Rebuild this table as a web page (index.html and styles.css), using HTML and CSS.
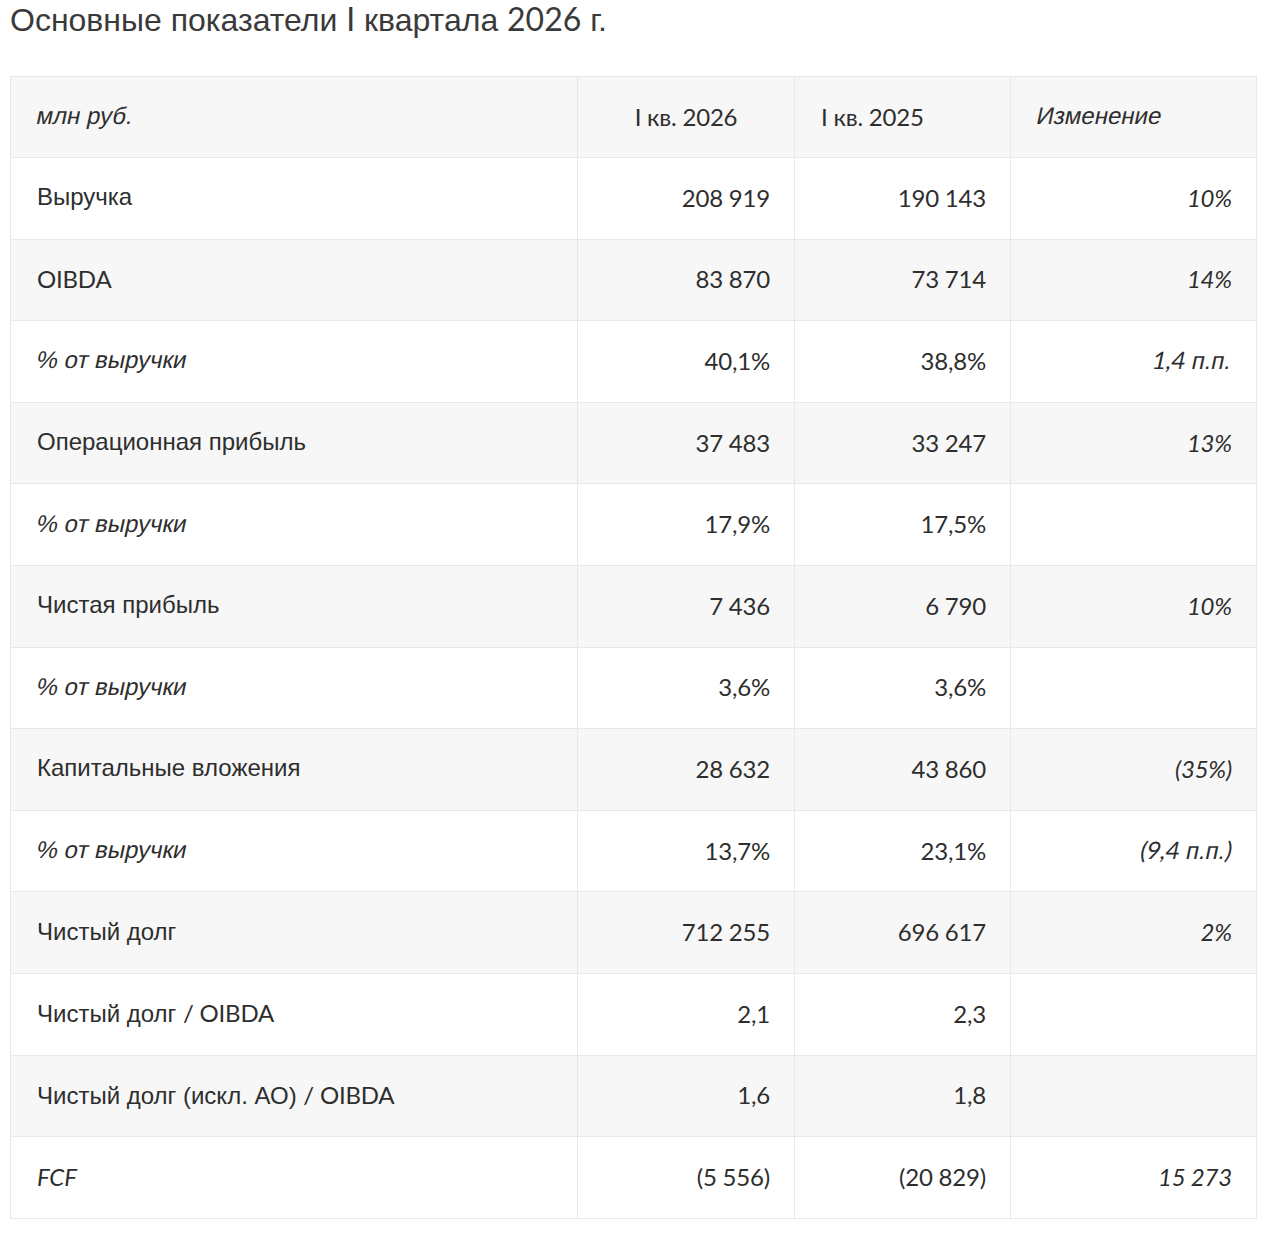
FILE: index.html
```html
<!DOCTYPE html>
<html lang="ru">
<head>
<meta charset="utf-8">
<title>Основные показатели I квартала 2026 г.</title>
<link rel="stylesheet" href="styles.css">
</head>
<body>
<h1 class="title">Основные показатели <span class="n">I</span> квартала <span class="n">2026</span> г.</h1>
<table class="kpi">
  <colgroup>
    <col class="c1"><col class="c2"><col class="c3"><col class="c4">
  </colgroup>
  <thead>
    <tr>
      <th><span class="ob">млн руб.</span></th>
      <th class="n center">I кв. 2026</th>
      <th class="n">I кв. 2025</th>
      <th><span class="ob">Изменение</span></th>
    </tr>
  </thead>
  <tbody>
    <tr><td>Выручка</td><td class="n r">208 919</td><td class="n r">190 143</td><td class="n r it">10%</td></tr>
    <tr><td><span class="n">OIBDA</span></td><td class="n r">83 870</td><td class="n r">73 714</td><td class="n r it">14%</td></tr>
    <tr><td><span class="ob">% от выручки</span></td><td class="n r">40,1%</td><td class="n r">38,8%</td><td class="r"><span class="ob"><span class="n">1,4</span> п.п.</span></td></tr>
    <tr><td>Операционная прибыль</td><td class="n r">37 483</td><td class="n r">33 247</td><td class="n r it">13%</td></tr>
    <tr><td><span class="ob">% от выручки</span></td><td class="n r">17,9%</td><td class="n r">17,5%</td><td></td></tr>
    <tr><td>Чистая прибыль</td><td class="n r">7 436</td><td class="n r">6 790</td><td class="n r it">10%</td></tr>
    <tr><td><span class="ob">% от выручки</span></td><td class="n r">3,6%</td><td class="n r">3,6%</td><td></td></tr>
    <tr><td>Капитальные вложения</td><td class="n r">28 632</td><td class="n r">43 860</td><td class="n r it">(35%)</td></tr>
    <tr><td><span class="ob">% от выручки</span></td><td class="n r">13,7%</td><td class="n r">23,1%</td><td class="r"><span class="ob"><span class="n">(9,4</span> п.п.<span class="n">)</span></span></td></tr>
    <tr><td>Чистый долг</td><td class="n r">712 255</td><td class="n r">696 617</td><td class="n r it">2%</td></tr>
    <tr><td>Чистый долг <span class="n">/ OIBDA</span></td><td class="n r">2,1</td><td class="n r">2,3</td><td></td></tr>
    <tr><td>Чистый долг (искл. АО) <span class="n">/ OIBDA</span></td><td class="n r">1,6</td><td class="n r">1,8</td><td></td></tr>
    <tr><td class="n it">FCF</td><td class="n r">(5 556)</td><td class="n r">(20 829)</td><td class="n r it">15 273</td></tr>
  </tbody>
</table>
</body>
</html>
```
FILE: styles.css
```css
html, body {
  margin: 0;
  padding: 0;
  background: #ffffff;
}
body {
  padding: 0 10px;
  font-family: "Liberation Sans", Arial, sans-serif;
  color: #2e2e2e;
}
.title {
  margin: 0 0 37px 0;
  font-size: 32px;
  line-height: 38px;
  font-weight: normal;
  color: #3a3a3a;
}
.title .n {
  font-family: Lato, "Liberation Sans", sans-serif;
  font-size: 32px;
}
.kpi {
  width: 1246px;
  border-collapse: collapse;
  table-layout: fixed;
  font-size: 24px;
}
.c1 { width: 567px; }
.c2 { width: 217px; }
.c3 { width: 216px; }
.c4 { width: 246px; }
.kpi th, .kpi td {
  border: 1px solid #e8e8e8;
  height: 81.6px;
  padding: 0 25px 2px 26px;
  text-align: left;
  font-weight: normal;
  vertical-align: middle;
  box-sizing: border-box;
}
.kpi thead th {
  background: #f7f7f7;
  height: 81px;
}
.kpi tbody tr:nth-child(even) td {
  background: #f7f7f7;
}
.kpi .n {
  font-family: Lato, "Liberation Sans", sans-serif;
  font-size: 24px;
  letter-spacing: -0.2px;
}
.kpi .it {
  font-style: italic;
}
.kpi .ob {
  display: inline-block;
  transform: skewX(-12deg);
}
.kpi .r {
  text-align: right;
  padding-right: 24px;
}
.kpi .center {
  text-align: center;
  padding: 0 0 2px 0;
}
```
